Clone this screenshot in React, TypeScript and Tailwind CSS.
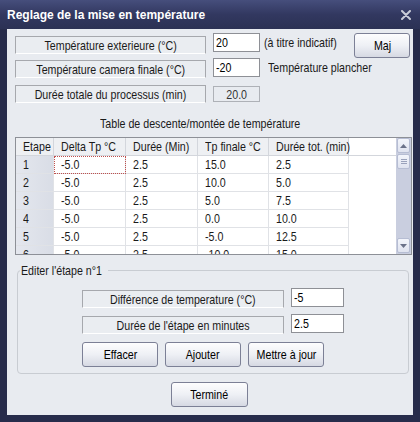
import React from "react";

const FONT = "font-['Liberation_Sans',Arial,sans-serif]";

function N({ children, center = false }: { children: React.ReactNode; center?: boolean }) {
  return (
    <span className={`inline-block whitespace-nowrap scale-x-[0.82] ${center ? "origin-center" : "origin-left"}`}>
      {children}
    </span>
  );
}

function LabelBox({ w, children, className = "" }: { w: string; children: React.ReactNode; className?: string }) {
  return (
    <div
      className={`${w} h-[18px] border-t border-l border-r border-[#a6a8ad] border-b border-b-white bg-[#eaedf1] flex items-center justify-center text-[13px] leading-none text-[#1a1a1a] ${className}`}
    >
      <N center>{children}</N>
    </div>
  );
}

function Input({ w, value }: { w: string; value: string }) {
  return (
    <div className={`${w} h-[19px] border border-[#8e9096] bg-white flex items-center pl-[2px] text-[13px] leading-none text-black`}>
      <N>{value}</N>
    </div>
  );
}

function Btn({ w, children, className = "" }: { w: string; children: React.ReactNode; className?: string }) {
  return (
    <div
      className={`${w} h-[25px] rounded-[3px] border border-[#7c8096] bg-gradient-to-b from-[#fdfdfe] via-[#eef0f5] to-[#d6d9e3] flex items-center justify-center text-[13px] leading-none text-black ${className}`}
    >
      <N center>{children}</N>
    </div>
  );
}

const rows = [
  ["1", "-5.0", "2.5", "15.0", "2.5"],
  ["2", "-5.0", "2.5", "10.0", "5.0"],
  ["3", "-5.0", "2.5", "5.0", "7.5"],
  ["4", "-5.0", "2.5", "0.0", "10.0"],
  ["5", "-5.0", "2.5", "-5.0", "12.5"],
  ["6", "-5.0", "2.5", "-10.0", "15.0"],
];

const colW = ["w-[38px]", "w-[72px]", "w-[72px]", "w-[71px]", "w-[80px]"];

function Table() {
  const headers = ["Etape", "Delta Tp °C", "Durée (Min)", "Tp finale °C", "Durée tot. (min)"];
  return (
    <div className="ml-[8px] mt-[6px] w-[397px] h-[118px] border border-[#8d9097] bg-white flex overflow-hidden">
      <div className="flex-1 overflow-hidden">
        <div className="flex h-[18px] bg-[#eef0f3] border-b border-[#d3d6dc]">
          {headers.map((h, i) => (
            <div
              key={i}
              className={`${colW[i]} shrink-0 h-full border-r border-[#d3d6dc] pl-[7px] flex items-center text-[13px] leading-none text-[#1a1a1a]`}
            >
              <N>{h}</N>
            </div>
          ))}
          <div className="flex-1 bg-white" />
        </div>
        {rows.map((r, ri) => (
          <div key={ri} className="flex h-[18px]">
            {r.map((c, ci) => (
              <div
                key={ci}
                className={`${colW[ci]} shrink-0 h-full border-b border-r border-[#e0e2e6] pl-[7px] flex items-center text-[13px] leading-none text-[#1a1a1a] ${
                  ci === 0 ? "bg-gradient-to-r from-[#e4e7ee] to-[#d9dde6]" : "bg-white"
                } ${ri === 0 && ci === 1 ? "outline outline-1 outline-dotted outline-[#c0504d] -outline-offset-1 bg-[#fffaf6]" : ""}`}
              >
                <N>{c}</N>
              </div>
            ))}
            <div className="flex-1" />
          </div>
        ))}
      </div>
      <div className="w-[15px] h-full bg-[#c9cedf] flex flex-col">
        <div className="h-[15px] mx-[1px] rounded-[2px] border border-[#b6bdd3] bg-gradient-to-b from-[#f3f5fb] to-[#dfe3ef] flex items-center justify-center">
          <svg width="7" height="4" viewBox="0 0 7 4"><path d="M0 4 L3.5 0 L7 4 Z" fill="#6b7289" /></svg>
        </div>
        <div className="h-[15px] mx-[1px] mt-[1px] rounded-[2px] border border-[#b6bdd3] bg-gradient-to-b from-[#f3f5fb] to-[#dfe3ef] flex flex-col items-center justify-center gap-[1px]">
          <div className="w-[6px] h-px bg-[#9aa2bb]" />
          <div className="w-[6px] h-px bg-[#9aa2bb]" />
          <div className="w-[6px] h-px bg-[#9aa2bb]" />
        </div>
        <div className="flex-1" />
        <div className="h-[15px] mx-[1px] mb-[1px] rounded-[2px] border border-[#b6bdd3] bg-gradient-to-b from-[#f3f5fb] to-[#dfe3ef] flex items-center justify-center">
          <svg width="7" height="4" viewBox="0 0 7 4"><path d="M0 0 L3.5 4 L7 0 Z" fill="#6b7289" /></svg>
        </div>
      </div>
    </div>
  );
}

export default function App() {
  return (
    <div className={`w-[420px] h-[422px] bg-[#272c4b] flex flex-col ${FONT}`}>
      <div className="h-[29px] shrink-0 bg-gradient-to-b from-[#464e7c] via-[#323860] to-[#2b3154] flex items-center justify-between pl-[7px] pr-[9px]">
        <span className="font-bold text-[12px] text-white leading-none">
          Reglage de la mise en température
        </span>
        <svg width="10" height="10" viewBox="0 0 10 10">
          <path d="M1 1 L9 9 M9 1 L1 9" stroke="#c9ccd8" strokeWidth="2" strokeLinecap="round" />
        </svg>
      </div>
      <div className="mx-[7px] h-[386px] bg-[#e8ebf0] flex flex-col">
        <div className="mt-[4px] h-[23px] flex items-start">
          <LabelBox w="w-[191px]" className="ml-[8px] mt-[3px]">Température exterieure (°C)</LabelBox>
          <Input w="w-[47px] ml-[7px]" value="20" />
          <span className="ml-[4px] leading-[19px] text-[13px] text-[#1a1a1a]"><N>(à titre indicatif)</N></span>
          <Btn w="w-[56px] h-[23px]" className="ml-auto mr-[3px]">Maj</Btn>
        </div>
        <div className="mt-[2px] h-[20px] flex items-start">
          <LabelBox w="w-[191px]" className="ml-[8px] mt-[2px]">Température camera finale (°C)</LabelBox>
          <Input w="w-[47px] ml-[7px]" value="-20" />
          <span className="ml-[8px] leading-[19px] text-[13px] text-[#1a1a1a]"><N>Température plancher</N></span>
        </div>
        <div className="mt-[7px] h-[18px] flex items-start">
          <LabelBox w="w-[191px]" className="ml-[8px]">Durée totale du processus (min)</LabelBox>
          <div className="ml-[7px] mt-[1px] w-[47px] h-[16px] border border-[#aeb1b7] bg-[#e8ebf0] flex items-center justify-center text-[13px] leading-none text-[#333]">
            <N center>20.0</N>
          </div>
        </div>
        <div className="mt-[13px] h-[15px] leading-[15px] ml-[93px] text-[13px] text-[#1a1a1a]">
          <N>Table de descente/montée de température</N>
        </div>
        <Table />
        <div className="relative mt-[15px] ml-[10px] w-[392px] h-[104px] rounded-[4px] border border-[#c8ccd2] flex flex-col">
          <span className="absolute left-[2px] top-[-8px] w-[88px] px-[1px] bg-[#e8ebf0] text-[13px] leading-[15px] text-[#1a1a1a]">
            <N>Editer l'étape n°1</N>
          </span>
          <div className="mt-[17px] ml-[64px] flex items-start">
            <LabelBox w="w-[202px]" className="mt-[2px] h-[17px]">Différence de temperature (°C)</LabelBox>
            <Input w="w-[53px] ml-[7px]" value="-5" />
          </div>
          <div className="mt-[6px] ml-[64px] flex items-start">
            <LabelBox w="w-[202px]" className="mt-[2px] h-[17px]">Durée de l'étape en minutes</LabelBox>
            <Input w="w-[53px] ml-[7px]" value="2.5" />
          </div>
          <div className="mt-[8px] ml-[64px] flex gap-[7px]">
            <Btn w="w-[76px]">Effacer</Btn>
            <Btn w="w-[76px]">Ajouter</Btn>
            <Btn w="w-[76px]">Mettre à jour</Btn>
          </div>
        </div>
        <Btn w="w-[77px]" className="mt-[8px] ml-[164px]">Terminé</Btn>
      </div>
    </div>
  );
}
